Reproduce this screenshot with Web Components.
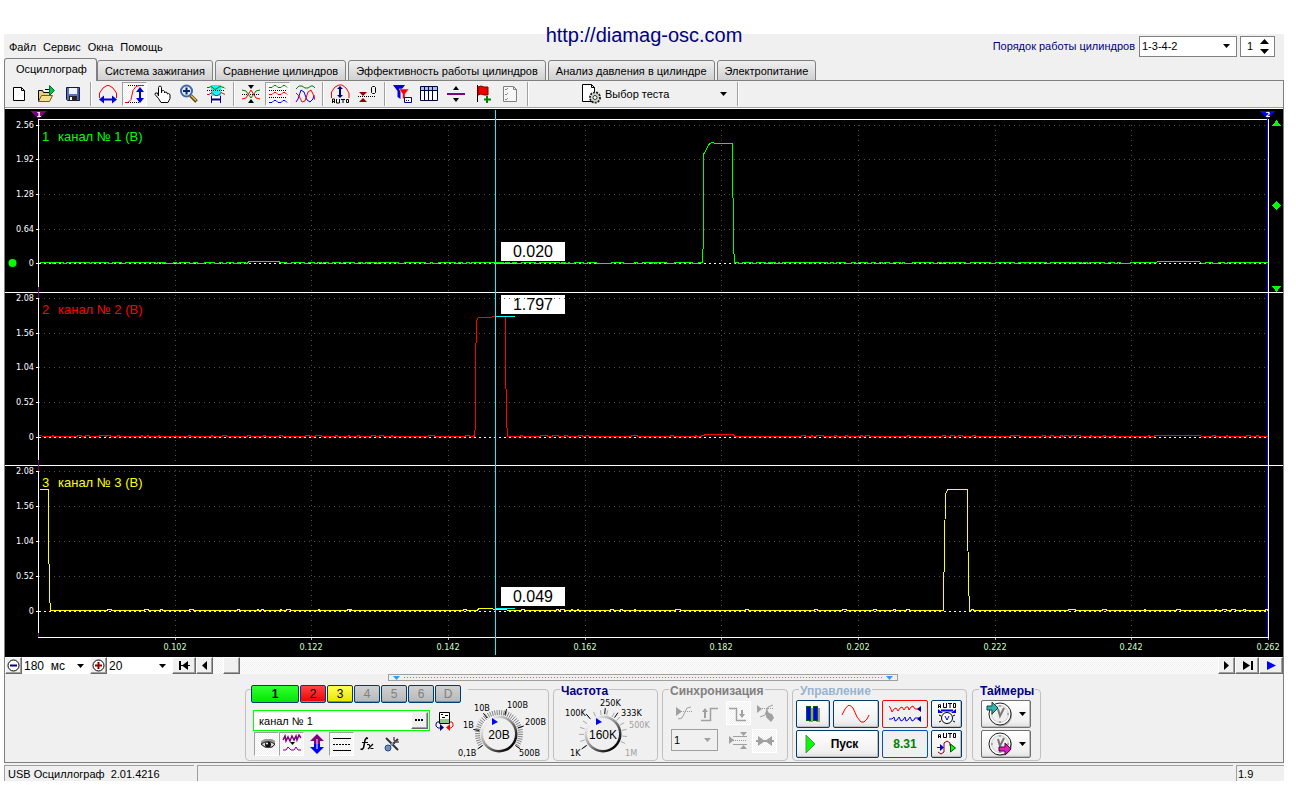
<!DOCTYPE html>
<html lang="ru">
<head>
<meta charset="utf-8">
<title>USB Осциллограф</title>
<style>
  body { margin: 0 12px 0 4px; background: #fff; color: #000; font: 11px/14px "Liberation Sans", Arial, sans-serif; }
</style>
</head>
<body>
<osc-app></osc-app>
<script>
/* Registers a custom element with its own styles and markup. */
function define(name, css, html, setup) {
  customElements.define(name, class extends HTMLElement {
    connectedCallback() {
      if (this.shadowRoot) return;
      const root = this.attachShadow({ mode: 'open' });
      const template = document.createElement('template');
      template.innerHTML = '<style>*{box-sizing:border-box}button,input,select{font:inherit;color:inherit;margin:0;padding:0;border:0;background:none;border-radius:0;outline:0}' + css + '</style>' +
        (typeof html === 'function' ? html(this) : html);
      root.append(template.content.cloneNode(true));
      if (setup) setup(this, root);
    }
  });
}

const DITHER = 'repeating-conic-gradient(#fff 0 25%, #f0f0f0 0 50%) 0 0 / 2px 2px';

/* ---------- icons: [width, height, markup] ---------- */
const clock = '<circle cx="15" cy="14" r="11" fill="#aaa"/><circle cx="14" cy="13" r="11" fill="#fff" stroke="#222"/><circle cx="14" cy="13" r="8.5" fill="#eee" stroke="#ccc"/><path d="M14 4v2M14 20v2M5 13h2M21 13h2" stroke="#777"/><path d="M12 8l2 7 4-8" fill="none" stroke="#777" stroke-width="2"/>';
const autoWord = '<path d="M1.500 6V3l1-1 1 1v3M1 4.500h3M6.500 1v4.500h3V1M11 1.500h4M13 1v5M16.500 1.500h2v4h-2z" fill="none" stroke="#000"/>';
const ICONS = {
  new: [20, 20, '<path d="M4.500 3.500h8l3 3v10h-11z" fill="#fff" stroke="#000"/><path d="M12.500 3.500v3h3" fill="none" stroke="#000"/>'],
  open: [20, 20, '<path d="M2.500 17.500v-11h4l1 2h6v3" fill="#e8cf7a" stroke="#000"/><path d="M2.500 17.500l3-6h11l-3 6z" fill="#f3df93" stroke="#7a5c10"/><path d="M9 5.500h4M13.500 3v6" stroke="#000"/><path d="M13.500 1.500l5 5-5 5z" fill="#00c832" stroke="#064" />'],
  save: [20, 20, '<path d="M3.500 3.500h13v13h-12l-1-1z" fill="#5a70b8" stroke="#101840"/><path d="M6 4h8v6H6z" fill="#eef2fa"/><path d="M6 12h8v5H6z" fill="#222"/><path d="M7 13h2v3H7z" fill="#fff"/><path d="M16 5v11" stroke="#223070"/>'],
  period: [20, 20, '<path d="M1.500 14V9L5 4l4-2.500h2L15 4l3.500 5v5" fill="none" stroke="#f00"/><path d="M4 15.500h12" stroke="#0000d8" stroke-width="2"/><path d="M1 15.500l5-4v8zM19 15.500l-5-4v8z" fill="#0000d8"/>'],
  amp: [22, 20, '<path d="M4 1.500h16M2 18.500h13" stroke="#000" stroke-dasharray="1 1"/><path d="M1 18.500h3l3-3 2-9 3-4 3-1h5" fill="none" stroke="#f00"/><path d="M16 6v10" stroke="#0000d8" stroke-width="2"/><path d="M12 8l4-5 4 5zM12 14l4 5 4-5z" fill="#0000d8"/>'],
  hand: [20, 20, '<path d="M6.500 12V3.500l1-1.500h1l1 1.500V9V7l2-.5 1 1V9l1-1 1.500.5.500 1.500 1-.5 1.500 1v4l-2 4h-7l-2.500-4-3.500-4 .5-1.500h2z" fill="#fff" stroke="#000"/>'],
  zoom: [20, 20, '<path d="M11.500 11.500l6 6" stroke="#5b4510" stroke-width="3.500"/><path d="M12 11.500l5 5" stroke="#e5bd52" stroke-width="1.500"/><circle cx="7.500" cy="7" r="5.500" fill="#dff1ff" stroke="#4267a8" stroke-width="2"/><path d="M4 7h7M7.500 3.500v7" stroke="#102070" stroke-width="2"/>'],
  span: [20, 20, '<path d="M5 1h10v17H5z" fill="#0ff"/><path d="M1 3.500h2l2-1 4 3 5-3 4 1 1 1" fill="none" stroke="#007000"/><path d="M1 6.500h18" stroke="#000" stroke-dasharray="1 1"/><path d="M1 10.500h2l3-2 3 3h3l3-3 4 2" fill="none" stroke="#f00"/><path d="M5 12h10v6H5z" fill="#fff"/><path d="M6 15.500h8" stroke="#000080" stroke-width="2"/><path d="M5.500 12v7M14.500 12v7" stroke="#000080"/>'],
  cross: [20, 20, '<path d="M7 1h6l-3 4zM7 19h6l-3-4z" fill="#000"/><path d="M1 10.500h18" stroke="#000" stroke-dasharray="1 1"/><path d="M1 6l4 1 5 7 5-7 4-1" fill="none" stroke="#008000"/><path d="M1 15l4-1 5-8 5 8 4 1" fill="none" stroke="#f00"/>'],
  waves: [20, 20, '<path d="M1 3.500h3l2-2h2l2 2h3l2-2h2l2 2" fill="none" stroke="#008000"/><path d="M1 6.500h18M1 13.500h18" stroke="#000" stroke-dasharray="1 1"/><path d="M1 10.500h3l2-2h2l2 2h3l2-2h2l2 2" fill="none" stroke="#f00"/><path d="M1 18.500h3l2-2h2l2 2h3l2-2h2l2 2" fill="none" stroke="#00f"/>'],
  overlay: [20, 20, '<path d="M1 5l3-3h3l3 2h3l3-2h2l2 2" fill="none" stroke="#008000"/><path d="M1 18l2-3 3-9 3 2 3 8 3 2 3-3 1-4" fill="none" stroke="#00f"/><path d="M1 9l3 3 3 6 3-1 3-9 3-2 3 6 1 4" fill="none" stroke="#f00"/>'],
  autoamp: [20, 20, '<path d="M1.500 14V8L5 3l4-2h3l4 3 3 5v5" fill="none" stroke="#f00"/><path d="M10 4v8" stroke="#000080" stroke-width="2"/><path d="M7 5l3-3 3 3zM7 11l3 3 3-3z" fill="#000080"/><path d="M2.500 19v-4h2v4M2 17.500h3M6.500 15v4h3v-4M11 15.500h4M13 15v4M16.500 15.500h2v3h-2z" fill="none" stroke="#000"/>'],
  zero: [20, 20, '<path d="M2 8h8l-4 4zM2 18h8l-4-4z" fill="#900000"/><path d="M1 12.500h18" stroke="#000" stroke-dasharray="1 1"/><path d="M14.500 3.500l1-1h2l1 1v5l-1 1h-2l-1-1z" fill="none" stroke="#000"/>'],
  filter: [20, 20, '<path d="M1 1h12L8.500 7v8l-3-2V7z" fill="#0000e0"/><path d="M7 5h10l-4 5v6l-2.500-2v-4z" fill="#f00" stroke="#f0f0f0" stroke-width=".5"/><path d="M12.500 13.500h7v5h-7z" fill="#fff" stroke="#000080"/><path d="M14 16.500h4" stroke="#000080" stroke-dasharray="1 1"/>'],
  table: [20, 20, '<path d="M1.500 2.500h17v14h-17z" fill="#fff" stroke="#000040"/><path d="M2 3h16v4H2z" fill="#9cc4f0"/><path d="M5.500 3v13M9.500 3v13M13.500 3v13M2 6.500h16" stroke="#000040"/>'],
  level: [20, 20, '<path d="M7 6h6l-3-4zM7 14h6l-3 4z" fill="#000"/><path d="M1 10h18" stroke="#800080" stroke-width="2"/>'],
  flag: [20, 20, '<path d="M4.500 1v17" stroke="#000"/><path d="M5 3l3-1 3 1h4v8h-4l-3-1-3 1z" fill="#f00000" stroke="#800000"/><path d="M14 12v7M11 15.500h7" stroke="#008000" stroke-width="2"/>'],
  checklist: [20, 20, '<path d="M3.500 2.500h10l3 3v12h-13z" fill="#f6f6f6" stroke="#808080"/><path d="M13.500 2.500v3h3" fill="none" stroke="#808080"/><path d="M5 5l1 1 2-2M5 10l1 1 2-2M5 15l1 1 2-2" fill="none" stroke="#888"/>'],
  test: [21, 20, '<path d="M1.500.500h9l3 3v14h-12z" fill="#fff" stroke="#000"/><path d="M10.500.500v3h3" fill="none" stroke="#000"/><circle cx="14" cy="13.500" r="5" fill="#dfe8df" stroke="#222" stroke-width="2" stroke-dasharray="2 1"/><circle cx="14" cy="13.500" r="4" fill="#c8d8c8"/><circle cx="14" cy="13.500" r="2" fill="#fff" stroke="#333"/>'],
  minus: [13, 13, '<circle cx="6.500" cy="6.500" r="5.500" fill="#fff" stroke="#000"/><path d="M3 6.500h7" stroke="#000080" stroke-width="2"/>'],
  plus: [13, 13, '<circle cx="6.500" cy="6.500" r="5.500" fill="#fff" stroke="#000"/><path d="M3 6.500h7M6.500 3v7" stroke="#900000" stroke-width="2"/>'],
  dots: [9, 3, '<path d="M0 0h2v2H0zM3 0h2v2H3zM6 0h2v2H6z"/>'],
  first: [11, 9, '<path d="M1 0v9" stroke="#000" stroke-width="2"/><path d="M2 4.500h9" stroke="#000"/><path d="M9 0v9L3 4.500z"/>'],
  prev: [5, 9, '<path d="M5 0v9L0 4.500z"/>'],
  next: [5, 9, '<path d="M0 0v9l5-4.500z"/>'],
  last: [11, 9, '<path d="M10 0v9" stroke="#000" stroke-width="2"/><path d="M1 0v9l7-4.500z"/>'],
  run: [9, 9, '<path d="M0 0v9l9-4.500z" fill="#00f"/>'],
  swap: [20, 20, '<path d="M4.500 1.500h10v11h-10z" fill="#fff" stroke="#000"/><path d="M5 8h9v4H5z" fill="#8c8"/><path d="M6 3.500h2M10 4.500h3M7 6.500h3" stroke="#000"/><path d="M4 11H2l-1 2v2l2 2h3" fill="none" stroke="#000080"/><path d="M5 13l4 3.500-4 3.500z" fill="#000080"/><path d="M15 11h2l1 2v2l-2 2h-2" fill="none" stroke="#f00"/><path d="M15 13l-4 3.500 4 3.500z" fill="#f00"/>'],
  eye: [20, 20, '<path d="M4 7l4-2h7l3 2v4l-3 3H9l-5-3z" fill="#999"/><path d="M4 10l4-2h6l4 2-3 3H8z" fill="#ddd" stroke="#222"/><circle cx="11" cy="10.500" r="3" fill="#111"/><circle cx="10" cy="9.500" r="1" fill="#fff"/>'],
  smooth: [20, 20, '<path d="M1 6l2-4 1 5 2-4 2 4 2-5 2 4 2-4 1 4 2-5 2 3" fill="none" stroke="#800080" stroke-width="1.500"/><path d="M8 8h5l-2.500 3z"/><path d="M1 16h3l2-3 3 3h3l2-3 2 3h3" fill="none" stroke="#800080"/>'],
  updown: [16, 20, '<path d="M8 0l7 7h-4v3H5V7H1z" fill="#800080"/><path d="M8 20l7-7h-4v-3H5v3H1z" fill="#00f"/><path d="M8 5v10" stroke="#fff"/>'],
  lines: [20, 20, '<path d="M1 4.500h18M1 16.500h18" stroke="#000"/><path d="M1 10.500h18" stroke="#000" stroke-dasharray="2 1"/>'],
  fx: [14, 16, '<path d="M8 2.500L6.500 2 5 4 3.500 12 2 13.500.500 13" fill="none" stroke="#000" stroke-width="1.500"/><path d="M2 6.500h6M7 8.500h2l2 4h2.500M13 8l-5 5" stroke="#000" fill="none" stroke-width="1.200"/>'],
  tools: [16, 16, '<path d="M2 2l9 9 3 3" stroke="#333" stroke-width="2"/><path d="M14 3l-5 5" stroke="#333" stroke-width="2"/><path d="M10 1v3l2 2h3" fill="none" stroke="#555" stroke-width="1.500"/><path d="M9 7l-4 4" stroke="#8098c0" stroke-width="2"/><circle cx="4" cy="12" r="3" fill="#7090c8" stroke="#304878"/>'],
  s1: [20, 20, '<path d="M2 4v9l6-4.500z" fill="#a0a0a0"/><path d="M5 8.500h13" stroke="#999" stroke-dasharray="1 1"/><path d="M4 16l4-1 5-10 4-1" fill="none" stroke="#a0a0a0"/>'],
  s2: [20, 20, '<path d="M1 17.500h9.500v-12H18" fill="none" stroke="#a0a0a0" stroke-width="1.500"/><path d="M5 8v7" stroke="#a0a0a0" stroke-width="2"/><path d="M2 9l3-4 3 4z" fill="#a0a0a0"/>'],
  s3: [20, 20, '<path d="M1 5.500h7.500v12H18" fill="none" stroke="#a0a0a0" stroke-width="1.500"/><path d="M14 7v6" stroke="#a0a0a0" stroke-width="2"/><path d="M11 11l3 4 3-4z" fill="#a0a0a0"/>'],
  s4: [20, 20, '<path d="M2 2v8l5-4z" fill="#a0a0a0"/><path d="M5 5.500h14" stroke="#999" stroke-dasharray="1 1"/><path d="M5 14l5-2 3-8 5-2" fill="none" stroke="#a0a0a0"/><path d="M11 5l3 5 3 1 2 4-3 4-5-5z" fill="#a0a0a0"/>'],
  s5: [20, 20, '<path d="M1 5v8l5-4zM12 1h7l-3.500 4zM12 18h7l-3.500-4z" fill="#a0a0a0"/><path d="M5 5.500h14M5 13.500h14" stroke="#a0a0a0"/><path d="M5 9.500h14" stroke="#999" stroke-dasharray="1 1"/>'],
  s6: [20, 20, '<path d="M3 5l7 5-7 5zM17 5l-7 5 7 5z" fill="#a0a0a0"/><path d="M1 10h18" stroke="#a0a0a0" stroke-width="2"/>'],
  pause: [14, 16, '<path d="M3 2h4v14H3zM10 2h4v14h-4z" fill="#999"/><path d="M0 0h5v15H0zM7 0h5v15H7z" fill="#006400"/><path d="M2 1h2v13H2zM9 1h2v13H9z" fill="#00f"/><path d="M1.500 1v13M8.500 1v13" stroke="#00f"/>'],
  sine: [30, 20, '<path d="M1 11l3-6 3-3.500h2L12 4l4 9 4 5h3l3-3 2-4" fill="none" stroke="#f00"/>'],
  stream: [34, 20, '<path d="M1 2l1 1 2 5 2-3 2-1 2 3 2-3 2-1 2 3 2-3 2 0 1 3 2-3 2-1 2 3h3" fill="none" stroke="#f00"/><path d="M1 15h3l2-2 1 4 2-1 2-3 2 4 2-1 2-3 1 4 2-1 2-3 2 4 2-1 1-2h4" fill="none" stroke="#00f"/><path d="M33 2v6l-4-3zM33 12v6l-4-3z" fill="#000080"/>'],
  autogauge: [20, 24, autoWord + '<path d="M4 8.500h12" stroke="#0000e0" stroke-width="2"/><path d="M1 11V7l5 4zM19 11V7l-5 4z" fill="#0000e0"/><circle cx="10" cy="16" r="5.500" fill="#fff" stroke="#000"/><path d="M8 14l2 4 2-4" fill="none" stroke="#00f"/><path d="M2 13l2 1M18 13l-2 1M2 20l2-1M18 20l-2-1" stroke="#000"/>'],
  autorun: [20, 24, autoWord + '<path d="M1 20l3 2 3-2V11l3-2 3 2v3" fill="none" stroke="#900000"/><path d="M0 15h3v-3l4 3.500L3 19v-3H0z" fill="#0000e0"/><path d="M13.500 12v8l5-4z" fill="#0f0" stroke="#005000"/>'],
  play: [11, 20, '<path d="M1 1v18l9-9z" fill="#0f0" stroke="#5c8a5c"/>'],
  clockin: [26, 26, clock + '<path d="M1 5h5V1l6 6-6 6V9H1z" fill="#3cb0a8" stroke="#0a4a48"/>'],
  clockout: [26, 26, clock + '<path d="M13 16h6v-4l6 6-6 6v-4h-6z" fill="#e020c0" stroke="#50003c"/>'],
  drop: [7, 4, '<path d="M0 0h7L3.500 4z" fill="currentColor"/>']
};
define('osc-icon', ':host{display:block;flex:none;pointer-events:none}svg{display:block}', el => {
  const [w, h, body] = ICONS[el.getAttribute('name')];
  return `<svg width="${w}" height="${h}" viewBox="0 0 ${w} ${h}" aria-hidden="true">${body}</svg>`;
});

/* ---------- small controls ---------- */
define('osc-tool', `
  :host{display:block;width:25px;height:24px;flex:none}
  button{display:grid;place-items:center;width:100%;height:100%;border:1px solid transparent}
  :host([pressed]) button{border-color:#a0a0a0 #fff #fff #a0a0a0;background:${DITHER}}
  :host([pressed][off]) button{border-color:#fff}`,
  el => `<button type="button" aria-label="${el.title}"><osc-icon name="${el.getAttribute('icon')}"></osc-icon></button>`);

define('osc-sep', ':host{display:block;width:8px;height:24px;flex:none;padding-left:4px}i{display:block;width:2px;height:100%;border-left:1px solid #a0a0a0;background:#fff}', '<i></i>');

define('osc-select', `
  :host{display:flex;position:relative;align-items:center;background:#fff;color:#000}
  select{appearance:none;width:100%;height:100%;padding-left:2px}
  osc-icon{position:absolute;right:6px;color:var(--arrow,#000)}`,
  el => `<select aria-label="${el.getAttribute('label')}"><option>${el.getAttribute('value')}</option></select><osc-icon name="drop"></osc-icon>`);

define('osc-scrollbutton', `
  :host{display:block;width:17px;height:17px;flex:none}
  button{display:grid;place-items:center;width:100%;height:100%;background:#f0f0f0;border:1px solid;border-color:#fff #696969 #696969 #fff;box-shadow:inset -1px -1px #a0a0a0}`,
  el => `<button type="button" aria-label="${el.title}"><osc-icon name="${el.getAttribute('icon')}"></osc-icon></button>`);

/* Framed button of the control groups */
define('osc-button', `
  :host{display:block;height:28px}
  button{display:flex;align-items:center;justify-content:center;gap:7px;width:100%;height:100%;border:1px solid var(--edge,#003c74);border-radius:2px;background:linear-gradient(#fff,#f0f0f0 80%,#e0e0e0);box-shadow:inset -1px -1px #c0c0c0}
  :host([flat]) button{box-shadow:none;background:#f0f0f0}`,
  '<button type="button"><slot></slot></button>');

define('osc-group', `
  :host{display:block;position:relative;height:72px;border:1px solid #c0c0c0;border-radius:4px;flex:none}
  .title{position:absolute;top:-6px;left:6px;padding:0 1px;background:#f0f0f0;font:bold 12px/14px "Liberation Sans",Arial,sans-serif;color:var(--title,#000080);white-space:nowrap}`,
  el => (el.hasAttribute('label') ? `<span class="title">${el.getAttribute('label')}</span>` : '') + '<slot></slot>');

/* ---------- header ---------- */
define('osc-header', `
  :host{display:flex;position:relative;height:24px;align-items:center;padding:0 9px 0 5px}
  nav{display:flex;gap:7px;flex:1;padding-top:2px}
  a.site{position:absolute;left:0;right:0;top:-10px;margin:auto;width:200px;text-align:center;font-size:20px;line-height:22px;color:#000080;text-decoration:none;white-space:nowrap}
  label{color:#000080;padding-right:4px}
  osc-select{width:98px;height:21px;border:1px solid #808080;margin-right:3px}
  .spin{display:flex;width:35px;height:21px;border:1px solid #808080;background:#fff;align-items:center}
  .spin input{width:19px;padding-left:6px}
  .spin svg{display:block}`,
  `<nav><button type="button">Файл</button><button type="button">Сервис</button><button type="button">Окна</button><button type="button">Помощь</button></nav>
   <a class="site" href="http://diamag-osc.com">http://diamag-osc.com</a>
   <label for="n">Порядок работы цилиндров</label>
   <osc-select label="Порядок" value="1-3-4-2"></osc-select>
   <span class="spin"><input id="n" type="text" inputmode="numeric" value="1"><svg width="9" height="15" aria-hidden="true"><path d="M0 5h9L4.500 0zM0 10h9L4.500 15z"/></svg></span>`);

/* ---------- tabs ---------- */
define('osc-tabs', `
  :host{display:flex;height:22px;align-items:flex-end;gap:2px}
  button{height:21px;margin-bottom:-1px;padding:0 7px;border:1px solid #808080;border-radius:3px 3px 0 0;background:linear-gradient(#f0f0f0,#d0d0d0);white-space:nowrap}
  button[aria-selected=true]{position:relative;height:23px;padding:0 9px 2px 11px;border-bottom:0;background:#f0f0f0;margin-right:-2px}`,
  () => ['Осциллограф', 'Система зажигания', 'Сравнение цилиндров', 'Эффективность работы цилиндров', 'Анализ давления в цилиндре', 'Электропитание']
    .map((t, i) => `<button type="button" role="tab" aria-selected="${!i}">${t}</button>`).join(''));

/* ---------- toolbar ---------- */
define('osc-toolbar', `
  :host{display:flex;height:28px;padding-top:1px;border-bottom:1px solid #fff;box-shadow:inset 0 -1px #a0a0a0}
  osc-tool{margin:0 1px}
  .test{display:flex;align-items:center;width:202px;padding-left:50px;gap:1px;height:24px}
  .test osc-select{flex:1;height:20px;background:none}`,
  () => ['new:Новый open:Открыть save:Сохранить', 'period:Период amp*:Амплитуда hand:Рука zoom:Масштаб span:Интервал', 'cross:Совместить waves*:Раздельно overlay:Наложить', 'autoamp:Авто zero:Ноль', 'filter:Фильтр table:Таблица level:Уровень flag:Метка checklist:Отчёт']
    .map(g => g.split(' ').map(s => {
      const [n, t] = s.split(':');
      return `<osc-tool icon="${n.replace('*', '')}" title="${t}"${n.includes('*') ? ' pressed' : ''}></osc-tool>`;
    }).join('') + '<osc-sep></osc-sep>').join('') +
    '<div class="test"><osc-icon name="test"></osc-icon><osc-select label="Тест" value="Выбор теста"></osc-select></div><osc-sep></osc-sep>');

/* ---------- oscillogram ---------- */
const CHANNELS = [
  { n: 1, color: '#0f0', label: 141, rows: [125, 159, 194, 229, 263], values: ['2.56', '1.92', '1.28', '0.64', '0'], read: '0.020', box: 242, mark: 263,
    trace: [[39, 262], [48, 262], [49, 'n'], [248, 261], [279, 261], [279, 'n'], [702, 262], [703, 236], [703, 154], [709, 143], [712, 142], [715, 143], [732, 143], [732, 150], [733, 243], [734, 263], [735, 'n'], [1155, 262], [1158, 261], [1199, 261], [1201, 263], [1202, 'n'], [1267, 262]] },
  { n: 2, color: '#f00', label: 314, rows: [298, 333, 367, 402, 437], values: ['2.08', '1.56', '1.04', '0.52', '0'], read: '1.797', box: 295, mark: 316,
    trace: [[39, 435], [44, 'n'], [474, 436], [475, 424], [475, 367], [476, 320], [478, 317], [505, 316], [505, 358], [506, 418], [507, 436], [508, 'n'], [703, 435], [705, 434], [733, 434], [734, 'n'], [1156, 435], [1200, 435], [1201, 'n'], [1267, 436]] },
  { n: 3, color: '#ff0', label: 487, rows: [471, 506, 541, 576, 611], values: ['2.08', '1.56', '1.04', '0.52', '0'], read: '0.049', box: 587, mark: 608,
    trace: [[39, 489], [48, 489], [48, 532], [49, 594], [50, 610], [51, 'n'], [477, 609], [479, 608], [506, 609], [507, 'n'], [943, 610], [943, 600], [944, 545], [945, 494], [947, 489], [967, 489], [967, 520], [968, 581], [969, 610], [970, 'n'], [1267, 610]] }
];
define('osc-plot', `
  :host{display:block;height:548px;background:#000;overflow:hidden}
  svg{display:block;width:100%;height:548px}
  .axis{font:9px "DejaVu Sans Condensed","DejaVu Sans",sans-serif;fill:#fff}
  .time{fill:#cfc}
  .name{font:13px "Liberation Sans",Arial,sans-serif}
  .read{font:16px "Liberation Sans",Arial,sans-serif}
  .flag{font:bold 7px "DejaVu Sans",sans-serif;fill:#fff}
  circle{shape-rendering:geometricPrecision}`,
  '<svg role="img" aria-label="Осциллограммы каналов"></svg>',
  (el, root) => {
    const svg = root.querySelector('svg');
    const draw = () => {
      const w = el.clientWidth, R = w + 5 - 15;
      const X = x => Math.round(38 + (x - 38) * (R - 38) / 1230);
      const line = (x1, y1, x2, y2, c, extra = '') => `<path d="M${x1 + (x1 === x2 ? .5 : 0)} ${y1 + (y1 === y2 ? .5 : 0)}L${x2 + (x1 === x2 ? .5 : 0)} ${y2 + (y1 === y2 ? .5 : 0)}" stroke="${c}" fill="none" ${extra}/>`;
      let s = '', cursor = X(495);
      for (let i = 0; i < 9; i++) {
        const x = Math.round(38 + (R - 38) * (i + 1) / 9);
        if (i < 8) s += line(x, 125, x, 637, '#505050', 'stroke-dasharray="1 4"');
        s += line(x, 637, x, 640, '#aaa') + `<text class="axis time" x="${x}" y="650" text-anchor="middle">${(0.102 + i * 0.02).toFixed(3)}</text>`;
      }
      CHANNELS.forEach(c => {
        c.rows.forEach((y, i) => {
          s += i < 4 ? line(39, y, R, y, '#505050', 'stroke-dasharray="1 4"') : line(39, y, R, y, '#fff', 'stroke-dasharray="2 3"');
          s += line(36, y, 38, y, '#fff') + `<text class="axis" x="34" y="${y + 3}" text-anchor="end">${c.values[i]}</text>`;
        });
      });
      s += line(38, 119, R, 119, '#fff') + line(38, 637, R + 1, 637, '#fff') + line(38, 119, 38, 637, '#fff') + line(R, 119, R, 638, '#fff') + line(R - 1, 119, R - 1, 637, '#00f');
      s += line(5, 292, w + 5, 292, '#fff') + line(5, 465, w + 5, 465, '#fff');
      s += line(38, 287, 38, 298, '#800080') + line(38, 460, 38, 471, '#800080') + line(38, 633, 38, 637, '#800080');
      CHANNELS.forEach(c => {
        const base = c.rows[4] - 1;
        let d = '', seed = 7 * c.n;
        c.trace.forEach(([x, y], i) => {
          if (y !== 'n') { d += `${d ? 'L' : 'M'}${X(x) + .5} ${y + .5}`; return; }
          const end = X(c.trace[i + 1][0]);
          for (let p = X(x); p < end;) {
            seed = (seed * 1103 + 377) % 9973;
            const v = base + (c.n === 3 ? -(seed % 11 === 0) : -(c.n === 2 && seed % 5 === 0) + (c.n === 1 && seed % 3 === 0));
            d += `L${p + .5} ${v + .5}`;
            p += 1 + seed % 4;
            d += `L${Math.min(p, end) + .5} ${v + .5}`;
          }
        });
        s += `<path d="${d}" fill="none" stroke="${c.color}"/>`;
        s += `<text class="name" x="42" y="${c.label}" fill="${c.color}">${c.n}</text><text class="name" x="58" y="${c.label}" fill="${c.color}">канал № ${c.n} (В)</text>`;
      });
      s += line(cursor, 110, cursor, 655, '#0ff');
      CHANNELS.forEach(c => {
        s += line(cursor, c.mark, cursor + 20, c.mark, '#0ff') + `<rect x="${cursor + 6}" y="${c.box}" width="64" height="19" fill="#fff"/>`;
        if (c.n === 2) s += line(cursor + 9, 298, cursor + 70, 298, '#606060', 'stroke-dasharray="1 4"');
        s += `<text class="read" x="${cursor + 38}" y="${c.box + 15}" text-anchor="middle">${c.read}</text>`;
      });
      const tri = (x, c, t) => `<path d="M${x - 7} 111h15l-7.500 8z" fill="${c}"/><text class="flag" x="${x + 1}" y="117" text-anchor="middle">${t}</text>`;
      s += tri(38, '#800080', 1) + tri(R - 1, '#00f', 2);
      s += `<circle cx="12.500" cy="263" r="4" fill="#0f0"/><path fill="#0f0" d="M${R + 4} 126h9l-4.500-6zM${R + 4} 286h9l-4.500 6zM${R + 4} 205.500l4.500-4.500 4.500 4.500-4.500 4.500z"/>`;
      svg.setAttribute('viewBox', `5 109 ${w} 548`);
      svg.setAttribute('shape-rendering', 'crispEdges');
      svg.innerHTML = s;
    };
    draw();
    new ResizeObserver(draw).observe(el);
  });

/* ---------- time scroll row ---------- */
define('osc-timebar', `
  :host{display:flex;height:17px;background:#fff;font-size:12px}
  osc-select{height:17px}
  .a{width:68px}.b{width:65px}
  .wide{width:24px}
  .track{flex:1;background:${DITHER};padding-left:10px}
  .thumb{display:block;width:17px;height:17px;background:#f0f0f0;border:1px solid;border-color:#fff #696969 #696969 #fff;box-shadow:inset -1px -1px #a0a0a0}`,
  `<osc-scrollbutton icon="minus" title="Меньше"></osc-scrollbutton><osc-select class="a" label="Развёртка" value="180 &nbsp;мс"></osc-select>
   <osc-scrollbutton icon="plus" title="Больше"></osc-scrollbutton><osc-select class="b" label="Деление" value="20"></osc-select>
   <osc-scrollbutton class="wide" icon="first" title="В начало"></osc-scrollbutton><osc-scrollbutton icon="prev" title="Назад"></osc-scrollbutton>
   <div class="track"><span class="thumb"></span></div>
   <osc-scrollbutton icon="next" title="Вперёд"></osc-scrollbutton><osc-scrollbutton class="wide" icon="last" title="В конец"></osc-scrollbutton><osc-scrollbutton class="wide" icon="run" title="Следить"></osc-scrollbutton>`);

/* ---------- dials: coordinates are relative to the knob centre ---------- */
const DIALS = {
  volt: { box: [-42, -44, 91, 69], value: '20В', dense: true, pointer: [-7, -16],
    labels: [['0,1В', -41, 22], ['1В', -36, -6], ['10В', -25, -23], ['100В', 8, -26], ['200В', 26, -9], ['500В', 20, 22]],
    marks: [-125, -80, -37, 17, 72, 125] },
  freq: { box: [-49, -44, 103, 69], value: '160K', pointer: [-7, -16],
    labels: [['1K', -33, 22], ['100K', -38, -18], ['250K', -3, -28], ['333K', 18, -18], ['500K', 26, -6, 1], ['1M', 22, 22, 1]],
    marks: [-125, -40, 5, 35] }
};
define('osc-dial', `
  :host{display:block;flex:none}svg{display:block}
  text{font:9px "DejaVu Sans Condensed","DejaVu Sans",sans-serif}
  .value{font:12px "Liberation Sans",Arial,sans-serif}`,
  el => {
    const d = DIALS[el.getAttribute('kind')], [x, y, w, h] = d.box;
    const tick = (a, r1, r2, c) => { const t = a * Math.PI / 180, p = r => `${(Math.sin(t) * r).toFixed(1)} ${(-Math.cos(t) * r).toFixed(1)}`; return `<path d="M${p(r1)}L${p(r2)}" stroke="${c}"/>`; };
    let s = '';
    for (let a = -125; a <= 125; a += d.dense ? 6 : 17) s += tick(a, 19, 24, d.dense ? '#808080' : '#a8a8a8');
    s += d.marks.map(a => tick(a, 20, 26, '#000')).join('');
    s += `<defs><linearGradient id="g" x1="0" y1="0" x2="1" y2="1"><stop offset=".15" stop-color="#f8f8f8"/><stop offset=".5" stop-color="#888"/><stop offset=".85" stop-color="#000"/></linearGradient></defs>
      <circle r="18.500" fill="url(#g)"/><circle r="16" fill="#f0f0f0"/><path d="M${d.pointer[0]} ${d.pointer[1]}v7l6-3z" fill="#00f"/>`;
    s += d.labels.map(([t, lx, ly, off]) => `<text x="${lx}" y="${ly}" fill="${off ? '#a0a0a0' : '#000'}">${t}</text>`).join('');
    return `<svg width="${w}" height="${h}" viewBox="${d.box.join(' ')}">${s}<text class="value" y="5" text-anchor="middle">${d.value}</text></svg>`;
  });

/* ---------- channel settings ---------- */
define('osc-channels', `
  :host{display:flex;padding-left:5px}
  .left{width:206px}
  .keys{display:flex;gap:1px;width:217px;height:18px;margin-top:-5px;background:#f0f0f0;font-size:12px}
  .keys button{width:26px;border:1px solid #003c74;border-radius:2px;color:#808080;background:linear-gradient(#d0d0d0,#b8b8b8);box-shadow:inset 0 -1px #888}
  .keys .k1{width:48px;background:linear-gradient(#3f3,#00e800);color:#000;font-weight:bold}
  .keys .k2{background:linear-gradient(#f44,#e00);color:#000}
  .keys .k3{background:linear-gradient(#ff5,#e6e600);color:#000}
  .name{display:flex;gap:5px;margin:7px 0 0 2px}
  .field{display:flex;width:177px;height:21px;border:1px solid #0f0;background:#fff;padding:1px;flex:none}
  .field input{flex:1;min-width:0;padding-left:4px}
  .tools{display:flex;margin:1px 0 0 3px}
  .name osc-tool{height:21px;margin-left:-3px}`,
  `<div class="left">
    <div class="keys"><button type="button" class="k1">1</button><button type="button" class="k2">2</button><button type="button" class="k3">3</button><button type="button">4</button><button type="button">5</button><button type="button">6</button><button type="button">D</button></div>
    <div class="name"><span class="field"><input type="text" aria-label="Имя канала" value="канал № 1"><osc-scrollbutton icon="dots" title="Выбрать"></osc-scrollbutton></span><osc-tool icon="swap" title="Обмен"></osc-tool></div>
    <div class="tools"><osc-tool icon="eye" title="Показать" pressed></osc-tool><osc-tool icon="smooth" title="Сгладить" pressed></osc-tool><osc-tool icon="updown" title="Инверсия"></osc-tool><osc-tool icon="lines" title="Уровни" pressed></osc-tool><osc-tool icon="fx" title="Функция"></osc-tool><osc-tool icon="tools" title="Настройка"></osc-tool></div>
  </div><osc-dial kind="volt"></osc-dial>`);

/* ---------- control panel ---------- */
define('osc-panel', `
  :host{display:block;padding:0 2px 1px 0}
  .split{display:flex;justify-content:space-between;align-items:center;width:510px;height:7px;margin:0 auto 8px;padding:0 4px;border:1px solid #a0a0a0}
  .split osc-icon{color:#39f}
  .split i{flex:1;height:1px;margin:0 4px;background:repeating-linear-gradient(90deg,#39f 0 1px,transparent 1px 3px)}
  .groups{display:flex;justify-content:center;gap:4px}
  .ch{width:304px}.fr{width:105px}.sy{width:126px;--title:#808080}.ct{width:175px;--title:#99b4d1}.tm{width:69px;margin-left:1px}
  .sync{display:grid;grid-template-columns:25px 28px 28px 25px;gap:4px 0;padding:11px 0 0 8px;justify-items:center}
  .sync osc-select{grid-column:1/3;justify-self:start;width:47px;height:22px;border:1px solid #a0a0a0;background:none;--arrow:#a0a0a0}
  .ctl{display:grid;grid-template-columns:34px 46px 46px 31px;gap:2px 3px;padding:10px 0 0 3px}
  .start{grid-column:1/3}
  b{font-size:12px}.start b{padding:0 12px 0 8px}.freq{color:#008000;--edge:#0055b0}
  .red{--edge:#f00}
  .timers{display:grid;gap:2px;padding:10px 0 0 8px;width:58px;--edge:#707070}`,
  `<div class="split"><osc-icon name="drop"></osc-icon><i></i><osc-icon name="drop"></osc-icon></div>
   <div class="groups">
    <osc-group class="ch" role="group" aria-label="Каналы"><osc-channels></osc-channels></osc-group>
    <osc-group class="fr" label="Частота"><osc-dial kind="freq"></osc-dial></osc-group>
    <osc-group class="sy" label="Синхронизация"><div class="sync">
      <osc-tool icon="s1" title="Уровень"></osc-tool><osc-tool icon="s2" title="Фронт"></osc-tool><osc-tool icon="s3" title="Спад" pressed off></osc-tool><osc-tool icon="s4" title="Вручную"></osc-tool>
      <osc-select label="Канал" value="1"></osc-select><osc-tool icon="s5" title="Окно"></osc-tool><osc-tool icon="s6" title="Центр" pressed off></osc-tool></div></osc-group>
    <osc-group class="ct" label="Управление"><div class="ctl">
      <osc-button><osc-icon name="pause"></osc-icon></osc-button><osc-button><osc-icon name="sine"></osc-icon></osc-button><osc-button class="red" flat><osc-icon name="stream"></osc-icon></osc-button><osc-button><osc-icon name="autogauge"></osc-icon></osc-button>
      <osc-button class="start"><osc-icon name="play"></osc-icon><b>Пуск</b></osc-button><osc-button class="freq" flat><b>8.31</b></osc-button><osc-button><osc-icon name="autorun"></osc-icon></osc-button></div></osc-group>
    <osc-group class="tm" label="Таймеры"><div class="timers">
      <osc-button><osc-icon name="clockin"></osc-icon><osc-icon name="drop"></osc-icon></osc-button><osc-button><osc-icon name="clockout"></osc-icon><osc-icon name="drop"></osc-icon></osc-button></div></osc-group>
   </div>`);

/* ---------- status bar ---------- */
define('osc-status', `
  :host{display:flex;gap:3px;height:16px;margin-top:2px}
  span{border:1px solid #a0a0a0;border-width:1px 0 0 1px;padding:1px 3px;white-space:pre}
  .v{width:190px}.m{flex:1}.r{width:48px;padding-left:1px}`,
  '<span class="v">USB Осциллограф  2.01.4216</span><span class="m"></span><span class="r">1.9</span>');

define('osc-app', `
  :host{display:block;padding-top:34px;background:linear-gradient(#fff 34px,#f0f0f0 34px)}
  main{border:1px solid #808080}`,
  '<osc-header></osc-header><osc-tabs></osc-tabs><main><osc-toolbar></osc-toolbar><osc-plot></osc-plot><osc-timebar></osc-timebar><osc-panel></osc-panel></main><osc-status></osc-status>');
</script>
</body>
</html>
